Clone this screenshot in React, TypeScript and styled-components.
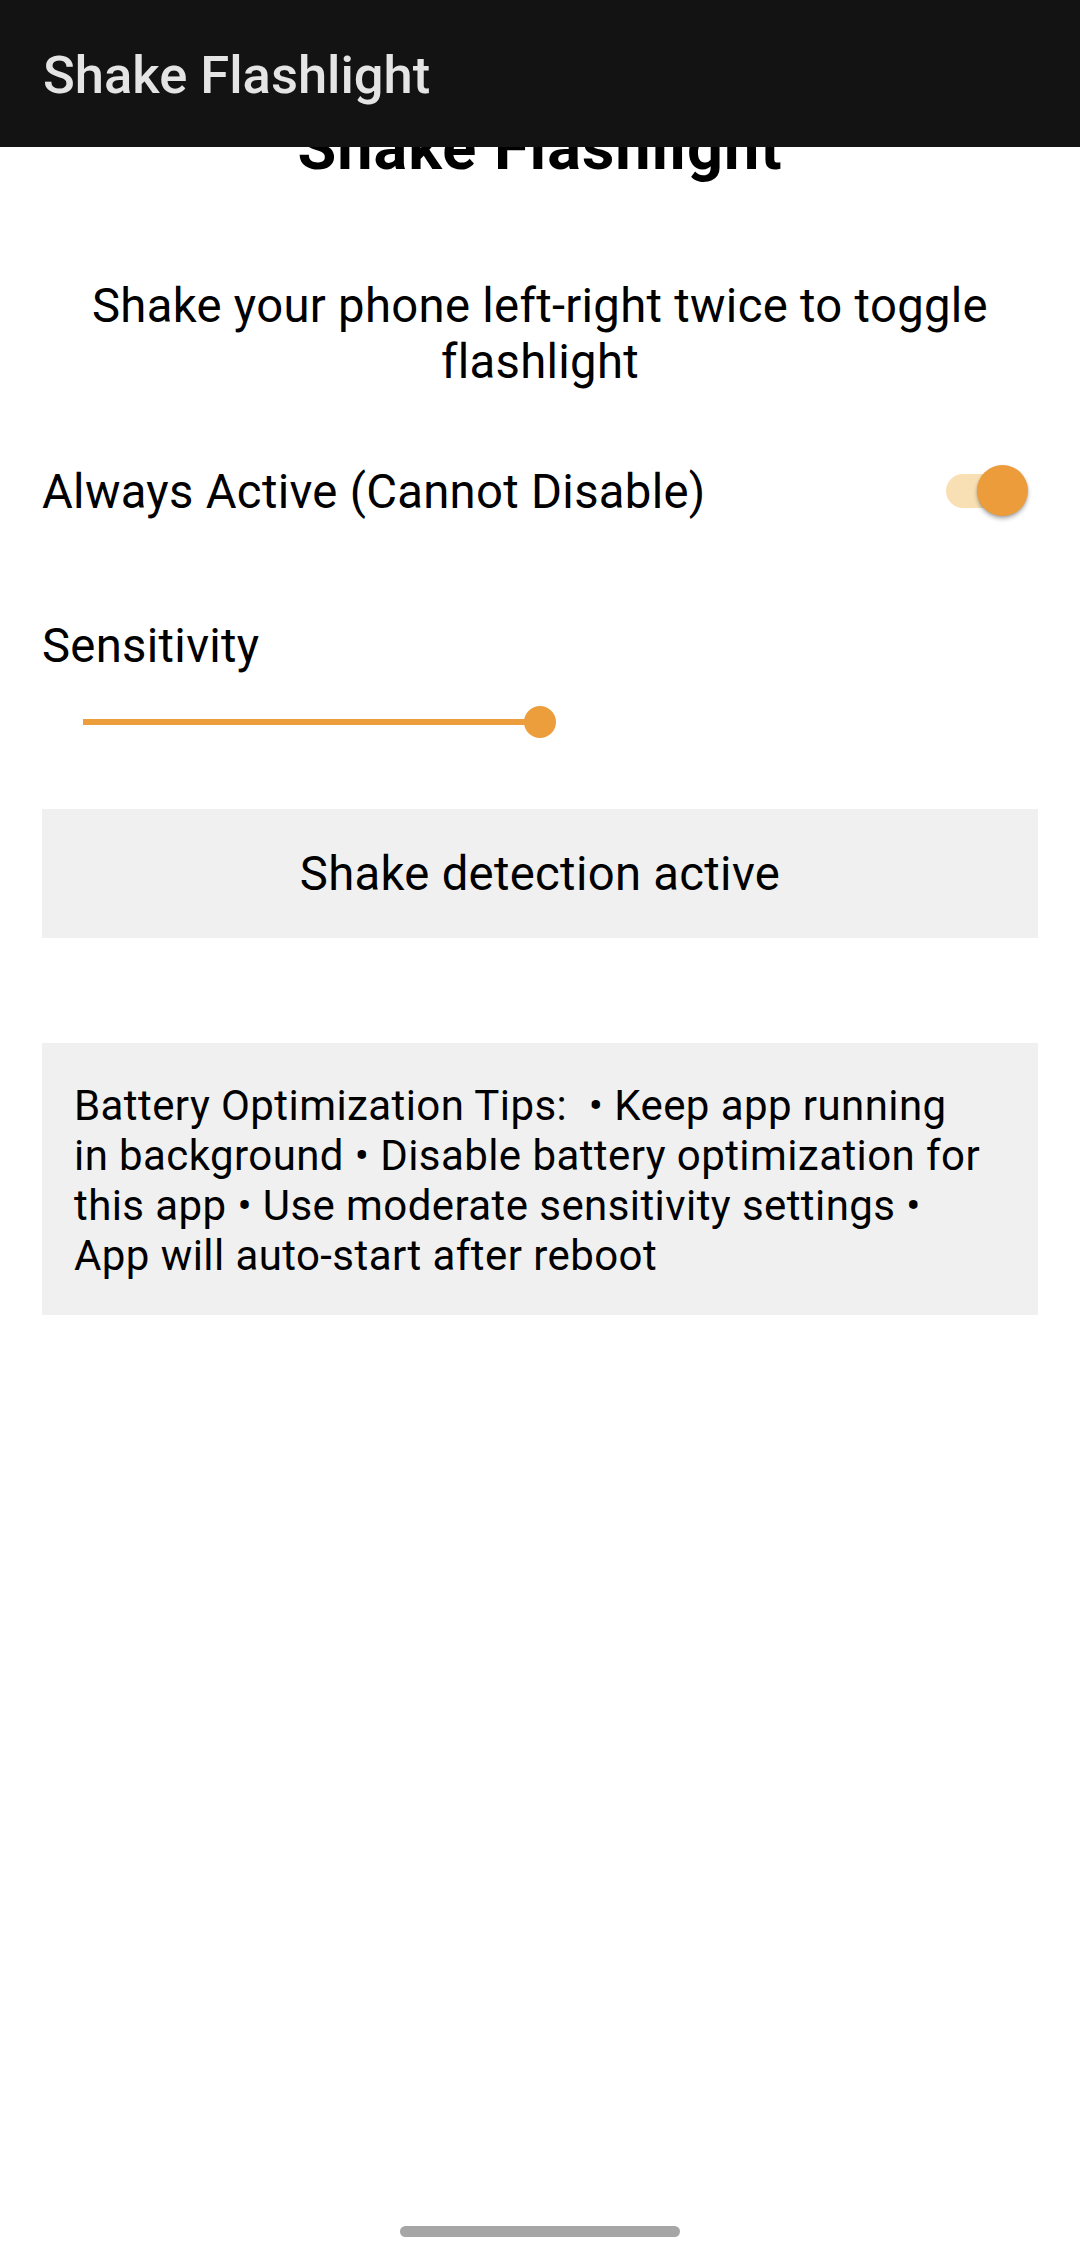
import React from "react";
import styled, { createGlobalStyle } from "styled-components";

const GlobalStyle = createGlobalStyle`
  html, body {
    margin: 0;
    padding: 0;
    background: #ffffff;
  }
  body {
    font-family: Roboto, "Noto Sans", "Liberation Sans", sans-serif;
    color: #000000;
  }
  * { box-sizing: border-box; }
`;

const Screen = styled.div`
  width: 1080px;
  height: 2251px;
  display: flex;
  flex-direction: column;
  background: #ffffff;
  overflow: hidden;
`;

const Header = styled.header`
  height: 147px;
  flex: 0 0 147px;
  background: #131313;
  display: flex;
  align-items: center;
  padding: 0 43px;
  position: relative;
  z-index: 2;
`;

const HeaderTitle = styled.h1`
  margin: 0;
  font-family: Roboto, "Noto Sans", sans-serif;
  font-weight: 500;
  font-size: 52.5px;
  line-height: 62px;
  color: #e4e4e4;
  padding-top: 2px;
`;

const Viewport = styled.main`
  flex: 1 1 auto;
  overflow: hidden;
  position: relative;
`;

const Content = styled.div`
  display: flex;
  flex-direction: column;
  padding: 0 42px;
  letter-spacing: 0.3px;
`;

const PageTitle = styled.h2`
  margin: -36.5px 0 0;
  text-align: center;
  font-weight: 700;
  font-size: 63px;
  line-height: 74px;
  letter-spacing: 1px;
  color: #000;
`;

const Description = styled.p`
  margin: 93.5px 0 0;
  text-align: center;
  font-size: 47.25px;
  line-height: 56px;
  padding: 0 20px;
`;

const SettingRow = styled.div`
  margin-top: 74px;
  display: flex;
  align-items: center;
  justify-content: space-between;
  height: 56px;
`;

const Label = styled.span<{ $top?: number }>`
  display: block;
  font-size: 47.25px;
  line-height: 56px;
  margin-top: ${(p) => p.$top ?? 0}px;
`;

const SwitchBox = styled.div`
  position: relative;
  width: 82px;
  height: 51px;
  margin-right: 10px;
  margin-top: -3px;
  display: flex;
  align-items: center;
`;

const SwitchTrack = styled.div<{ $on: boolean }>`
  width: 76px;
  height: 34px;
  border-radius: 17px;
  background: ${(p) => (p.$on ? "#f9e0b4" : "#b9b9b9")};
`;

const SwitchThumb = styled.div<{ $on: boolean }>`
  position: absolute;
  top: 0;
  ${(p) => (p.$on ? "right: 0;" : "left: 0;")}
  width: 51px;
  height: 51px;
  border-radius: 50%;
  background: ${(p) => (p.$on ? "#ec9c3a" : "#f1f1f1")};
  box-shadow: 0 3px 4px rgba(0, 0, 0, 0.28), 0 1px 2px rgba(0, 0, 0, 0.12);
`;

const SliderBox = styled.div`
  margin-top: 32px;
  height: 32px;
  width: 539px;
  padding: 0 41px;
  display: flex;
  align-items: center;
`;

const SliderRail = styled.div`
  position: relative;
  width: 100%;
  height: 6px;
`;

const SliderFill = styled.div`
  height: 6px;
  background: #ed9e3c;
`;

const SliderThumb = styled.div`
  position: absolute;
  top: -13px;
  width: 32px;
  height: 32px;
  margin-left: -16px;
  border-radius: 50%;
  background: #ed9e3c;
`;

const StatusBox = styled.div`
  margin-top: 71px;
  background: #f0f0f0;
  padding: 36.5px 20px;
  text-align: center;
  font-size: 47.25px;
  line-height: 56px;
`;

const TipsBox = styled.div`
  margin-top: 105px;
  background: #f0f0f0;
  padding: 38px 50px 34px 32px;
  font-size: 42px;
  line-height: 50px;
  letter-spacing: 0.42px;
  white-space: pre-wrap;
`;

const NavBar = styled.div`
  flex: 0 0 39px;
  height: 39px;
  display: flex;
  align-items: center;
  justify-content: center;
  background: #ffffff;
`;

const HomeIndicator = styled.div`
  width: 280px;
  height: 11px;
  border-radius: 6px;
  background: #a6a6a6;
`;

function Switch({ on }: { on: boolean }) {
  return (
    <SwitchBox role="switch" aria-checked={on}>
      <SwitchTrack $on={on} />
      <SwitchThumb $on={on} />
    </SwitchBox>
  );
}

function Slider({ value }: { value: number }) {
  const pct = `${value * 100}%`;
  return (
    <SliderBox>
      <SliderRail>
        <SliderFill style={{ width: pct }} />
        <SliderThumb style={{ left: pct }} />
      </SliderRail>
    </SliderBox>
  );
}

export default function App() {
  return (
    <>
      <GlobalStyle />
      <Screen>
        <Header>
          <HeaderTitle>Shake Flashlight</HeaderTitle>
        </Header>
        <Viewport>
          <Content>
            <PageTitle>Shake Flashlight</PageTitle>
            <Description>Shake your phone left-right twice to toggle flashlight</Description>
            <SettingRow>
              <Label>Always Active (Cannot Disable)</Label>
              <Switch on={true} />
            </SettingRow>
            <Label $top={98}>Sensitivity</Label>
            <Slider value={1} />
            <StatusBox>Shake detection active</StatusBox>
            <TipsBox>
              {"Battery Optimization Tips:  • Keep app running in background • Disable battery optimization for this app • Use moderate sensitivity settings • App will auto-start after reboot"}
            </TipsBox>
          </Content>
        </Viewport>
        <NavBar>
          <HomeIndicator />
        </NavBar>
      </Screen>
    </>
  );
}
